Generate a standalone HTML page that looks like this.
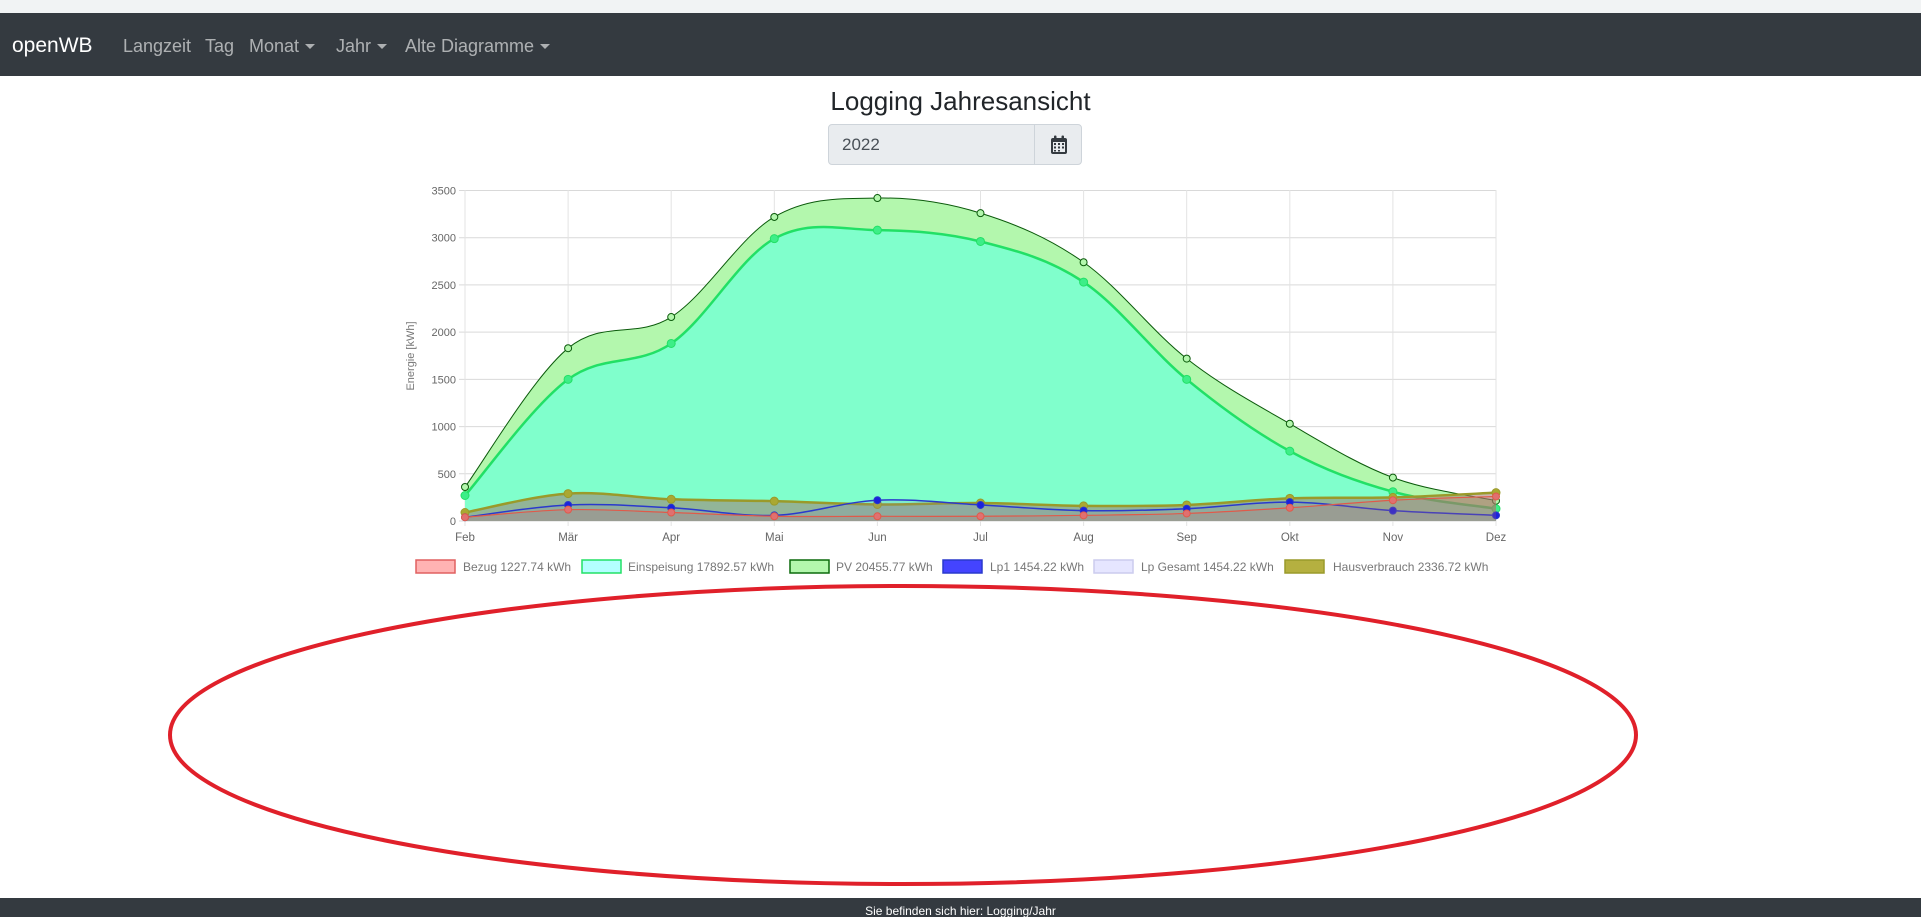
<!DOCTYPE html>
<html><head><meta charset="utf-8">
<style>
html,body{margin:0;padding:0;width:1921px;height:917px;overflow:hidden;background:#fff;font-family:"Liberation Sans",Arial,sans-serif;}
.top{position:absolute;left:0;top:0;width:1921px;height:13px;background:#f1f3f4;border-bottom:1px solid #ddd;}
.nav{position:absolute;left:0;top:13px;width:1921px;height:63px;background:#343a40;}
.brand{position:absolute;left:12px;top:21px;color:#fff;font-size:21px;}
.ni{position:absolute;top:23px;color:rgba(255,255,255,.6);font-size:18px;}
.car{display:inline-block;width:0;height:0;border-left:5px solid transparent;border-right:5px solid transparent;border-top:5px solid rgba(255,255,255,.6);margin-left:6px;vertical-align:3px;}
h1{position:absolute;left:0;width:1921px;top:86px;margin:0;text-align:center;font-weight:400;font-size:26px;color:#212529;}
.inp{position:absolute;left:828px;top:124px;width:254px;height:41px;border:1px solid #ced4da;border-radius:4px;background:#e9ecef;box-sizing:border-box;}
.inp span{position:absolute;left:13px;top:10px;font-size:17px;color:#495057;}
.inp .btn{position:absolute;left:205px;top:0;width:48px;height:39px;border-left:1px solid #ced4da;}
.foot{position:absolute;left:0;top:898px;width:1921px;height:19px;background:#343a40;color:#fff;font-size:12px;text-align:center;line-height:26px;}
svg{position:absolute;left:0;top:0;}
</style></head><body>
<div class="top"></div>
<div class="nav">
<div class="brand">openWB</div>
<div class="ni" style="left:123px">Langzeit</div>
<div class="ni" style="left:205px">Tag</div>
<div class="ni" style="left:249px">Monat<span class="car"></span></div>
<div class="ni" style="left:336px">Jahr<span class="car"></span></div>
<div class="ni" style="left:405px">Alte Diagramme<span class="car"></span></div>
</div>
<h1>Logging Jahresansicht</h1>
<div class="inp"><span>2022</span><div class="btn">
<svg style="left:14px;top:10px" width="20" height="20" viewBox="0 0 20 20"><rect x="2" y="3" width="16" height="16" rx="2" fill="#343a40"/><rect x="5" y="0.5" width="2.5" height="5" rx="1" fill="#343a40"/><rect x="12.5" y="0.5" width="2.5" height="5" rx="1" fill="#343a40"/><rect x="4" y="7" width="12" height="10" fill="#e9ecef"/><g fill="#343a40"><rect x="5" y="8" width="2" height="2"/><rect x="9" y="8" width="2" height="2"/><rect x="13" y="8" width="2" height="2"/><rect x="5" y="11.5" width="2" height="2"/><rect x="9" y="11.5" width="2" height="2"/><rect x="13" y="11.5" width="2" height="2"/><rect x="5" y="15" width="2" height="1.5"/><rect x="9" y="15" width="2" height="1.5"/></g></svg>
</div></div>
<svg id="c" width="1921" height="917" style="position:absolute;left:0;top:0"></svg>
<div class="foot">Sie befinden sich hier: Logging/Jahr</div>
<script>
var X0=465,DX=103.1,Y0=521,K=330.5/3500,XE=X0+10*DX;
var months=["Feb","Mär","Apr","Mai","Jun","Jul","Aug","Sep","Okt","Nov","Dez"];
var d={
pv:[360,1830,2160,3220,3420,3260,2740,1720,1030,460,215],
ein:[270,1500,1880,2990,3080,2960,2530,1500,740,310,130],
haus:[90,290,230,210,175,190,160,170,240,250,300],
lp:[40,170,140,60,220,170,110,130,200,110,60],
bez:[40,120,90,50,50,50,60,80,140,220,260]};
function pts(a){return a.map(function(v,i){return [X0+i*DX,Y0-v*K];});}
function curve(p){var s="M"+p[0][0]+","+p[0][1];var t=0.17;
for(var i=0;i<p.length-1;i++){var p0=p[i-1]||p[i],p1=p[i],p2=p[i+1],p3=p[i+2]||p2;
var c1=[p1[0]+(p2[0]-p0[0])*t,p1[1]+(p2[1]-p0[1])*t],c2=[p2[0]-(p3[0]-p1[0])*t,p2[1]-(p3[1]-p1[1])*t];
s+=" C"+c1+" "+c2+" "+p2;}return s;}
var h="";
for(var j=0;j<=7;j++){var y=Y0-j*500*K;h+='<line x1="'+(X0-6)+'" x2="'+XE+'" y1="'+y+'" y2="'+y+'" stroke="#d9d9d9"/>';
h+='<text x="456" y="'+(y+4)+'" text-anchor="end" font-size="11" fill="#666">'+(j*500)+'</text>';}
for(var i=0;i<11;i++){var x=X0+i*DX;h+='<line x1="'+x+'" x2="'+x+'" y1="190" y2="'+(Y0+5)+'" stroke="#e3e3e3"/>';
h+='<text x="'+x+'" y="541" text-anchor="middle" font-size="11.5" fill="#666">'+months[i]+'</text>';}
h+='<text transform="translate(414,356) rotate(-90)" text-anchor="middle" font-size="11" fill="#777">Energie [kWh]</text>';
function area(a,fill,stroke,sw,pr,pf){var p=pts(a),c=curve(p);
var s='<path d="'+c+' L'+p[p.length-1][0]+','+Y0+' L'+X0+','+Y0+' Z" fill="'+fill+'"/>';
s+='<path d="'+c+'" fill="none" stroke="'+stroke+'" stroke-width="'+sw+'"/>';
p.forEach(function(q){s+='<circle cx="'+q[0]+'" cy="'+q[1]+'" r="'+pr+'" fill="'+pf+'" stroke="'+stroke+'" stroke-width="1"/>';});return s;}
h+=area(d.pv,"#b3f7ad","#0b5a0b",1,3.5,"#b3f7ad");
h+=area(d.ein,"#80ffcc","#22e066",2.5,4,"#3dee88");
h+=area(d.haus,"rgba(160,120,110,0.55)","#9a9a2a",2.5,4,"#aaa832");
h+=area(d.lp,"rgba(120,120,200,0.15)","#2a3acc",1.5,3.5,"#1a22dd");
h+=area(d.bez,"rgba(200,100,100,0.2)","#e05a4a",1.2,3.5,"#e07070");
var L=[[416,463,"Bezug 1227.74 kWh","#ffb3b3","#e06060"],[582,628,"Einspeisung 17892.57 kWh","#b3ffff","#22e066"],[790,836,"PV 20455.77 kWh","#b3f7ad","#0b6a0b"],[943,990,"Lp1 1454.22 kWh","#4444ff","#2a3acc"],[1094,1141,"Lp Gesamt 1454.22 kWh","#e6e6ff","#ccccee"],[1285,1333,"Hausverbrauch 2336.72 kWh","#b5b040","#9a9a2a"]];
L.forEach(function(l){h+='<rect x="'+l[0]+'" y="560" width="39" height="13" fill="'+l[3]+'" stroke="'+l[4]+'" stroke-width="1.5"/>';
h+='<text x="'+l[1]+'" y="571" font-size="12" fill="#777">'+l[2]+'</text>';});
h+='<ellipse cx="903" cy="735" rx="733" ry="149" fill="none" stroke="#e0202a" stroke-width="4"/>';
document.getElementById("c").innerHTML=h;
</script>
</body></html>
